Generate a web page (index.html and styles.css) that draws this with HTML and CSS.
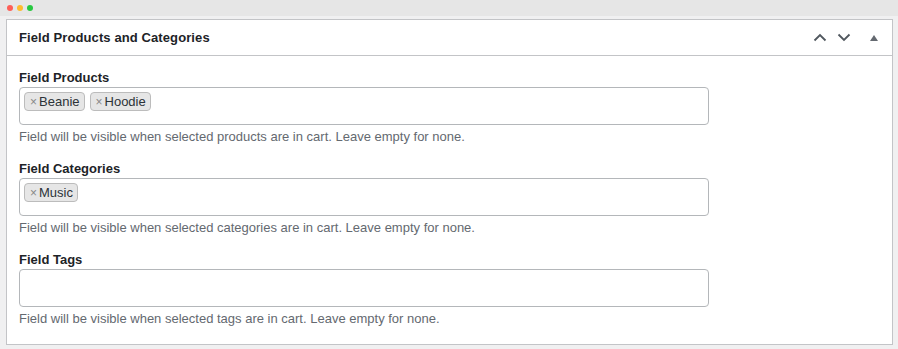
FILE: index.html
```html
<!DOCTYPE html>
<html lang="en">

<head>
    <meta charset="UTF-8">
    <meta name="viewport" content="width=device-width, initial-scale=1.0">
    <title>Field Products and Categories</title>
    <link rel="stylesheet" href="styles.css">
</head>

<body>
    <div class="titlebar">
        <span class="dot red"></span>
        <span class="dot yellow"></span>
        <span class="dot green"></span>
    </div>
    <div class="content">
        <div class="postbox">
            <div class="postbox-header">
                <h2>Field Products and Categories</h2>
                <div class="handle-actions">
                    <svg class="chev" width="14" height="9" viewBox="0 0 14 9"><path d="M1.5 7.5 L7 2 L12.5 7.5" fill="none" stroke="#50575e" stroke-width="1.8"/></svg>
                    <svg class="chev" width="14" height="9" viewBox="0 0 14 9"><path d="M1.5 1.5 L7 7 L12.5 1.5" fill="none" stroke="#50575e" stroke-width="1.8"/></svg>
                    <svg class="toggle" width="8" height="6" viewBox="0 0 8 6"><path d="M0 6 L4 0 L8 6 Z" fill="#646970"/></svg>
                </div>
            </div>
            <div class="inside">
                <div class="field">
                    <label>Field Products</label>
                    <div class="select-box">
                        <span class="tag"><span class="remove">×</span>Beanie</span>
                        <span class="tag"><span class="remove">×</span>Hoodie</span>
                    </div>
                    <p class="description">Field will be visible when selected products are in cart. Leave empty for none.</p>
                </div>
                <div class="field">
                    <label>Field Categories</label>
                    <div class="select-box">
                        <span class="tag"><span class="remove">×</span>Music</span>
                    </div>
                    <p class="description">Field will be visible when selected categories are in cart. Leave empty for none.</p>
                </div>
                <div class="field">
                    <label>Field Tags</label>
                    <div class="select-box"></div>
                    <p class="description">Field will be visible when selected tags are in cart. Leave empty for none.</p>
                </div>
            </div>
        </div>
    </div>
</body>

</html>
```

FILE: styles.css
```css
body {
    margin: 0;
    font-family: "Liberation Sans", Arial, sans-serif;
    background-color: #f0f0f1;
    color: #1d2327;
    width: 898px;
    height: 349px;
    overflow: hidden;
}

.titlebar {
    height: 16px;
    background-color: #e6e6e6;
    display: flex;
    align-items: center;
    gap: 4px;
    padding-left: 7px;
}

.dot {
    width: 6px;
    height: 6px;
    border-radius: 50%;
}

.red { background-color: #fe5f57; }
.yellow { background-color: #febc2e; }
.green { background-color: #28c840; }

.content {
    padding: 3px 5px 4px 6px;
}

.postbox {
    background-color: #fff;
    border: 1px solid #c3c4c7;
    height: 326px;
    box-sizing: border-box;
}

.postbox-header {
    height: 35px;
    border-bottom: 1px solid #c3c4c7;
    display: flex;
    align-items: center;
    justify-content: space-between;
    padding: 0 14px 0 12px;
}

.postbox-header h2 {
    margin: 0;
    font-size: 13px;
    font-weight: bold;
    letter-spacing: 0.1px;
    color: #1d2327;
}

.handle-actions {
    display: flex;
    align-items: center;
    gap: 10px;
}

.toggle {
    margin-left: 9px;
}

.inside {
    padding: 13px 12px 0 12px;
}

.field {
    margin-bottom: 14px;
}

.field label {
    display: block;
    font-size: 13px;
    font-weight: bold;
    line-height: 18px;
    color: #1d2327;
}

.select-box {
    width: 690px;
    height: 38px;
    box-sizing: border-box;
    border: 1px solid #b4b7ba;
    border-radius: 4px;
    display: flex;
    align-items: flex-start;
    gap: 5px;
    padding: 4px 4px;
}

.tag {
    display: flex;
    align-items: center;
    height: 19px;
    box-sizing: border-box;
    padding: 0 4px 0 5px;
    background-color: #e6e6e6;
    border: 1px solid #bcbcbc;
    border-radius: 4px;
    font-size: 13px;
    color: #2c3338;
}

.remove {
    color: #888;
    font-size: 12px;
    margin-right: 2px;
}

.description {
    margin: 3px 0 0 0;
    font-size: 13px;
    line-height: 18px;
    color: #646970;
}
```
